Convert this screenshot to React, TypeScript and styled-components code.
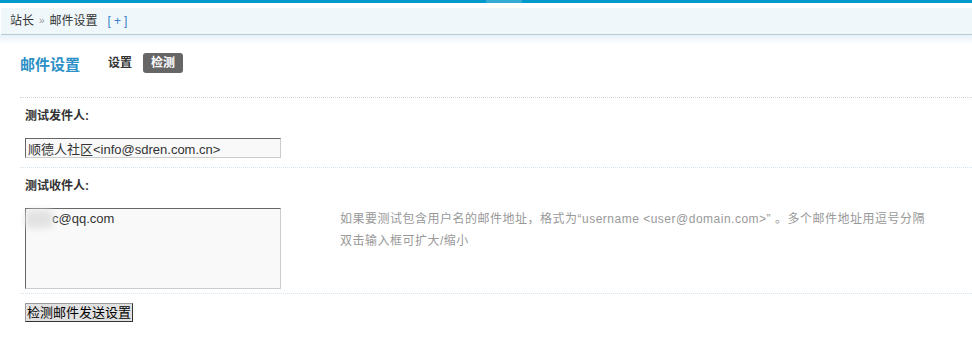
import styled, { createGlobalStyle } from "styled-components";

const GlobalStyle = createGlobalStyle`
  body {
    margin: 0;
    background: #fff;
    font-family: "Liberation Sans", "Noto Sans CJK SC", sans-serif;
    font-size: 12px;
    color: #333;
  }
`;

const Page = styled.div`
  width: 972px;
`;

const TopStrip = styled.div`
  height: 3px;
  background: linear-gradient(
    to right,
    #0099cc 0,
    #0099cc 486px,
    #35acd6 486px,
    #35acd6 522px,
    #0099cc 522px
  );
  margin-bottom: 5px;
`;

const Crumbs = styled.div`
  height: 26px;
  margin-left: 1px;
  background: #eff7fb;
  border-bottom: 1px solid #b4ccd2;
  display: flex;
  align-items: center;
  padding-left: 9px;
  gap: 4px;
  line-height: 26px;
`;

const Sep = styled.span`
  color: #999;
  font-size: 10px;
  margin: 0 1px;
`;

const AddLink = styled.span`
  color: #3a7fc6;
  margin-left: 6px;
  letter-spacing: 3px;
`;

const Fade = styled.div`
  height: 10px;
  background: linear-gradient(to bottom, #e8f1fa, #fff);
`;

const Main = styled.div`
  padding-left: 20px;
`;

const TitleRow = styled.div`
  display: flex;
  align-items: center;
  height: 20px;
  margin: 8px 0 24px;
`;

const Title = styled.h3`
  margin: 0 28px 0 0;
  font-size: 15px;
  font-weight: 600;
  color: #2b90c6;
`;

const Tab = styled.span<{ $active?: boolean }>`
  font-weight: bold;
  font-size: 12px;
  line-height: 20px;
  padding: 0 8px;
  margin-right: 3px;
  border-radius: 3px;
  color: ${(p) => (p.$active ? "#fff" : "#333")};
  background: ${(p) => (p.$active ? "#666" : "transparent")};
  &:first-of-type {
    padding-left: 0;
  }
`;

const Section = styled.div<{ $grey?: boolean; $pb?: number }>`
  border-top: 1px dotted ${(p) => (p.$grey ? "#d6d6d6" : "#d5e4ee")};
  padding: 9px 0 ${(p) => p.$pb ?? 9}px 5px;
`;

const Label = styled.div`
  font-weight: bold;
  line-height: 18px;
  margin-bottom: 13px;
`;

const Field = styled.div`
  display: flex;
  align-items: flex-start;
`;

const Input = styled.input`
  box-sizing: border-box;
  width: 256px;
  height: 20px;
  margin: 0;
  padding: 0 2px;
  border: 1px solid;
  border-color: #666 #ccc #ccc #666;
  background: #f9f9f9;
  font-family: "Liberation Sans", "Noto Sans CJK SC", sans-serif;
  font-size: 13px;
  color: #333;
`;

const AreaWrap = styled.div`
  position: relative;
  width: 256px;
  height: 81px;
`;

const Area = styled.textarea`
  box-sizing: border-box;
  width: 256px;
  height: 81px;
  margin: 0;
  padding: 2px 2px;
  text-indent: 24px;
  border: 1px solid;
  border-color: #666 #ccc #ccc #666;
  background: #f9f9f9;
  font-family: "Liberation Sans", "Noto Sans CJK SC", sans-serif;
  font-size: 13px;
  color: #333;
  resize: none;
  display: block;
`;

const Blur = styled.span`
  position: absolute;
  left: 0;
  top: 2px;
  width: 28px;
  height: 18px;
  background: #e2e2e2;
  filter: blur(3px);
  border-radius: 6px;
`;

const Hint = styled.div`
  margin-left: 59px;
  color: #999;
  line-height: 22px;
  letter-spacing: 0.5px;
`;

const Button = styled.button`
  height: 19px;
  width: 108px;
  padding: 0;
  margin: 0;
  border: 1px solid;
  border-color: #9a9a9a #333 #333 #9a9a9a;
  background: #e1e1e1;
  font-family: "Liberation Sans", "Noto Sans CJK SC", sans-serif;
  font-size: 13px;
  color: #000;
  line-height: 17px;
`;

export default function App() {
  return (
    <Page>
      <GlobalStyle />
      <TopStrip />
      <Crumbs>
        <span>站长</span>
        <Sep>»</Sep>
        <span>邮件设置</span>
        <AddLink>[+]</AddLink>
      </Crumbs>
      <Fade />
      <Main>
        <TitleRow>
          <Title>邮件设置</Title>
          <Tab>设置</Tab>
          <Tab $active>检测</Tab>
        </TitleRow>
        <Section $grey>
          <Label>测试发件人:</Label>
          <Field>
            <Input defaultValue="顺德人社区<info@sdren.com.cn>" />
          </Field>
        </Section>
        <Section $pb={4}>
          <Label>测试收件人:</Label>
          <Field>
            <AreaWrap>
              <Area defaultValue="c@qq.com" />
              <Blur />
            </AreaWrap>
            <Hint>
              如果要测试包含用户名的邮件地址，格式为“username &lt;user@domain.com&gt;” 。多个邮件地址用逗号分隔
              <br />
              双击输入框可扩大/缩小
            </Hint>
          </Field>
        </Section>
        <Section>
          <Button>检测邮件发送设置</Button>
        </Section>
      </Main>
    </Page>
  );
}
